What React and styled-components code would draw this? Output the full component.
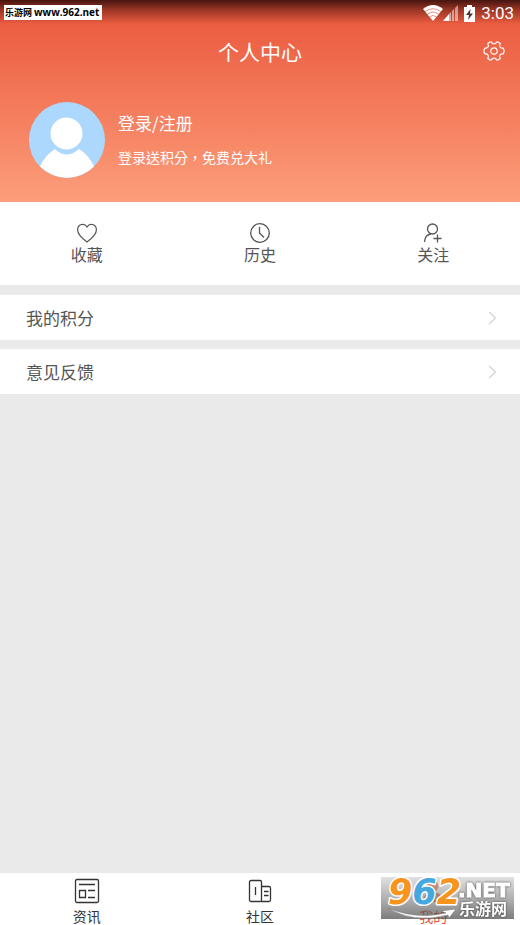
import React from "react";
import styled, { createGlobalStyle } from "styled-components";

const GlobalStyle = createGlobalStyle`
  * {
    box-sizing: border-box;
  }
  body {
    margin: 0;
    background: #eaeaea;
    font-family: "Noto Sans CJK SC", sans-serif;
  }
  button {
    border: 0;
    padding: 0;
    background: none;
    color: inherit;
    font: inherit;
    cursor: pointer;
  }
  a {
    color: inherit;
    text-decoration: none;
  }
  svg {
    display: block;
    flex: none;
  }
`;

const Page = styled.div`
  position: relative;
  display: flex;
  flex-direction: column;
  min-height: 100vh;
`;

const Header = styled.header`
  padding-bottom: 23px;
  color: #fff;
  background:
    linear-gradient(rgba(40, 10, 8, 0.85) 0, rgba(60, 15, 10, 0.45) 10px, rgba(60, 15, 10, 0) 24px),
    linear-gradient(#e9523a 0, #ec5d41 24px, #fc9e7b 100%);
`;

const StatusBar = styled.div`
  display: flex;
  justify-content: flex-end;
  align-items: center;
  height: 26px;
  padding-right: 6px;
`;

const Battery = styled.span`
  margin: 0 6px;
`;

const Clock = styled.span`
  font: 17px/26px Roboto, sans-serif;
`;

const TitleBar = styled.div`
  display: grid;
  grid-template-columns: 1fr auto 1fr;
  align-items: center;
  height: 50px;
  padding: 0 15px;
`;

const Title = styled.h1`
  grid-column: 2;
  margin: 0;
  font-size: 21px;
  font-weight: 400;
  line-height: 32px;
`;

const SettingsButton = styled.button`
  justify-self: end;
`;

const Profile = styled.section`
  display: flex;
  align-items: center;
  gap: 12px;
  padding: 25px 28px 0;
`;

const LoginLink = styled.a`
  display: block;
  font-size: 17px;
  line-height: 24px;
`;

const Hint = styled.p`
  margin: 12px 0 2px;
  font-family: "Noto Sans CJK TC", sans-serif;
  font-size: 14px;
  line-height: 20px;
`;

const Shortcuts = styled.section`
  display: grid;
  grid-template-columns: repeat(3, 1fr);
  height: 83px;
  margin-bottom: 10px;
  background: #fff;
`;

const Shortcut = styled.button`
  display: flex;
  flex-direction: column;
  align-items: center;
  padding-top: 20px;
  color: #555;
  font-size: 16px;
  line-height: 20px;
`;

const Row = styled.a`
  display: flex;
  justify-content: space-between;
  align-items: center;
  height: 45px;
  margin-bottom: 9px;
  padding: 0 23px 0 26px;
  background: #fff;
  color: #555;
  font-size: 17px;
`;

const TabBar = styled.nav`
  display: grid;
  grid-template-columns: repeat(3, 1fr);
  height: 52px;
  margin-top: auto;
  background: #fff;
`;

const Tab = styled.a`
  display: flex;
  flex-direction: column;
  align-items: center;
  padding-top: 5px;
  color: ${(props) => (props.$active ? "#e9573f" : "#333")};
  font-size: 14px;
  line-height: 24px;
`;

// site label and logo float over the page
const SiteLabel = styled.div`
  position: absolute;
  top: 5px;
  left: 4px;
  padding: 0 3px 0 1px;
  background: #fff;
  color: #000;
  font: bold 9px/14px "Noto Sans CJK SC", sans-serif;
  white-space: nowrap;
`;

const SiteUrl = styled.span`
  margin-left: 2px;
  font-family: "Open Sans", sans-serif;
  font-size: 10px;
`;

const SiteLogo = styled.div`
  position: absolute;
  right: 6px;
  bottom: 6px;
`;

const WifiIcon = () => (
  <svg width="20" height="16" viewBox="0 0 20 16">
    <path d="M0 4Q10-4 20 4L10 16Z" fill="#fff" />
    <path d="M2 6.600Q10 .8 18 6.600M4.200 9.200Q10 5 15.800 9.200M6.400 11.800Q10 9.200 13.600 11.800" fill="none" stroke="#e5786a" strokeWidth=".8" />
  </svg>
);

const SignalIcon = () => (
  <svg width="15" height="16" viewBox="0 0 15 16">
    <path d="M0 16 6 9V16Z" fill="#fff" />
    <path d="M6 9 8 7V16H6Z M9 6 11 4V16H9Z M12 3 15 0V16H12Z" fill="#fff" opacity=".5" />
  </svg>
);

const BatteryIcon = () => (
  <svg width="11" height="17" viewBox="0 0 11 17">
    <path d="M3 0H8V2H11V17H0V2H3Z" fill="#fff" />
    <path d="M6.500 4 2 10H5L4 15 9 8.500H6Z" fill="#54352f" />
  </svg>
);

const GearIcon = () => (
  <svg width="22" height="20" viewBox="0 0 22 20" fill="none" stroke="#fff" strokeWidth="1.200" strokeLinejoin="round">
    <path d="M7 1H8.500Q9 3 11 3T13.500 1H15L17.300 2.500Q16 4.500 17 6T20 7L21 9V11L20 13Q18 12.700 17 14T17.300 17.500L15 19H13.500Q13 17 11 17T8.500 19H7L4.700 17.500Q6 15.500 5 14T2 13L1 11V9L2 7Q4 7.300 5 6T4.700 2.500Z" />
    <circle cx="11" cy="10" r="3.200" />
  </svg>
);

const Avatar = () => (
  <svg width="78" height="78" viewBox="0 0 78 78">
    <circle cx="39" cy="39" r="38" fill="#add8fd" />
    <circle cx="38.500" cy="32.500" r="16" fill="#fff" />
    <path d="M27 48Q38.500 59 51 48 61 54 66 65.500A38 38 0 0 1 12 65.500Q17 54 27 48Z" fill="#fff" />
  </svg>
);

const HeartIcon = () => (
  <svg width="22" height="22" viewBox="0 0 22 22" fill="none" stroke="#555" strokeWidth="1.200">
    <path d="M11 20C7 17 1.600 12.500 1.600 8 1.600 1.800 8.500.6 11 5 13.500.6 20.400 1.800 20.400 8 20.400 12.500 15 17 11 20Z" />
  </svg>
);

const HistoryIcon = () => (
  <svg width="22" height="22" viewBox="0 0 22 22" fill="none" stroke="#555" strokeWidth="1.300">
    <circle cx="11" cy="11" r="9.300" />
    <path d="M10.500 5V11L15 15.500" />
  </svg>
);

const FollowIcon = () => (
  <svg width="22" height="22" viewBox="0 0 22 22" fill="none" stroke="#555" strokeWidth="1.300">
    <circle cx="10.500" cy="7" r="5" />
    <path d="M2.500 20Q3 12.500 9 12M11.500 16.500H19.500M15.500 12.500V20.500" />
  </svg>
);

const ChevronIcon = () => (
  <svg width="9" height="14" viewBox="0 0 9 14" fill="none" stroke="#d4d4d4" strokeWidth="1.300">
    <path d="M1 1 7.500 7 1 13" />
  </svg>
);

const NewsIcon = () => (
  <svg width="26" height="26" viewBox="0 0 26 26" fill="none" stroke="#333" strokeWidth="1.300">
    <rect x="1.500" y="1.500" width="23" height="23" rx="1.500" />
    <path d="M5 6.500H21M14 12.500H21M14 19.500H21M5.500 12.500H11.500V19.500H5.500Z" />
  </svg>
);

const CommunityIcon = () => (
  <svg width="26" height="26" viewBox="0 0 26 26" fill="none" stroke="#333" strokeWidth="1.300">
    <rect x="2.500" y="2.500" width="12" height="21" rx="1.500" />
    <path d="M8.500 9V17M14.500 8.500H22Q23.500 8.500 23.500 10V22Q23.500 23.500 22 23.500H14M17 13.500H21.500M17 17.500H21.500" />
  </svg>
);

const MineIcon = () => (
  <svg width="26" height="26" viewBox="0 0 26 26" fill="#e9573f">
    <circle cx="13" cy="8" r="5.500" />
    <path d="M3 24Q3 14 13 14T23 24Z" />
  </svg>
);

const Logo = () => (
  <svg width="133" height="50" viewBox="0 -8 133 50">
    <defs>
      <linearGradient id="plate" x1="0" y1="0" x2="0" y2="1">
        <stop offset="0" stopColor="#cccccc" stopOpacity=".6" />
        <stop offset="1" stopColor="#404040" stopOpacity=".68" />
      </linearGradient>
    </defs>
    <rect width="133" height="42" fill="url(#plate)" />
    <path d="M7 31Q35 43 65 36L60 34 75 32 68 41 67 38Q32 47 7 31Z" fill="#fff" stroke="#777" strokeWidth=".5" />
    <g fontFamily="DejaVu Sans" fontWeight="bold" stroke="#fff" paintOrder="stroke" strokeLinejoin="round">
      <text x="7" y="27" fontSize="35" fontStyle="italic" strokeWidth="3" fill="#f7941d">
        9<tspan fill="#45a9df">6</tspan>2
      </text>
      <text x="77" y="20" fontSize="20" strokeWidth="1" fill="#fff" style={{ filter: "drop-shadow(0 0 1px #444)" }}>
        .NET
      </text>
    </g>
    <text x="78" y="38" fontFamily="Noto Sans CJK SC" fontWeight="bold" fontSize="16" fill="#fff" style={{ filter: "drop-shadow(0 0 1px #444)" }}>
      乐游网
    </text>
  </svg>
);

const App = () => {
  return (
    <>
      <GlobalStyle />
      <Page>
        <Header>
          <StatusBar>
            <WifiIcon />
            <SignalIcon />
            <Battery>
              <BatteryIcon />
            </Battery>
            <Clock>3:03</Clock>
          </StatusBar>
          <TitleBar>
            <Title>个人中心</Title>
            <SettingsButton aria-label="设置">
              <GearIcon />
            </SettingsButton>
          </TitleBar>
          <Profile>
            <Avatar />
            <div>
              <LoginLink href="#login">登录/注册</LoginLink>
              <Hint>登录送积分，免费兑大礼</Hint>
            </div>
          </Profile>
        </Header>

        <Shortcuts>
          <Shortcut>
            <HeartIcon />
            收藏
          </Shortcut>
          <Shortcut>
            <HistoryIcon />
            历史
          </Shortcut>
          <Shortcut>
            <FollowIcon />
            关注
          </Shortcut>
        </Shortcuts>

        <Row href="#points">
          我的积分
          <ChevronIcon />
        </Row>
        <Row href="#feedback">
          意见反馈
          <ChevronIcon />
        </Row>

        <TabBar>
          <Tab href="#news">
            <NewsIcon />
            资讯
          </Tab>
          <Tab href="#community">
            <CommunityIcon />
            社区
          </Tab>
          <Tab href="#mine" $active>
            <MineIcon />
            我的
          </Tab>
        </TabBar>

        <SiteLabel>
          乐游网<SiteUrl>www.962.net</SiteUrl>
        </SiteLabel>
        <SiteLogo>
          <Logo />
        </SiteLogo>
      </Page>
    </>
  );
};

export default App;
